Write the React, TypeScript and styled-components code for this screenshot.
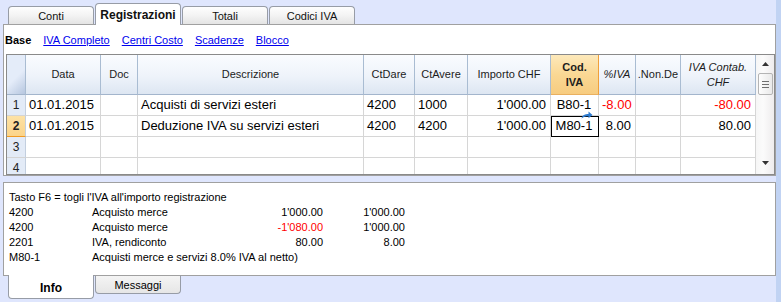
import { Fragment } from "react";
import styled, { createGlobalStyle } from "styled-components";

const GlobalStyle = createGlobalStyle`
  html, body {
    margin: 0;
    padding: 0;
  }
  body {
    font-family: "Liberation Sans", Arial, sans-serif;
    font-size: 11px;
    color: #000;
  }
`;

const Window = styled.div`
  width: 781px;
  height: 302px;
  box-sizing: border-box;
  background: #dfe6fd;
  border-right: 5px solid #c1d3f3;
  display: flex;
  flex-direction: column;
  overflow: hidden;
`;

const TopTabs = styled.div`
  display: flex;
  align-items: flex-end;
  gap: 1px;
  height: 24px;
  padding-left: 8px;
`;

const TopTab = styled.div<{ $active?: boolean }>`
  width: 86px;
  box-sizing: border-box;
  height: ${(p) => (p.$active ? 22 : 18)}px;
  margin-bottom: ${(p) => (p.$active ? -1 : 0)}px;
  border: 1px solid #979ca6;
  border-bottom: none;
  border-radius: 4px 4px 0 0;
  background: ${(p) =>
    p.$active ? "#fff" : "linear-gradient(#fefefe, #f3f3f3 50%, #e4e4e4)"};
  font-weight: ${(p) => (p.$active ? "bold" : "normal")};
  font-size: ${(p) => (p.$active ? 12 : 11)}px;
  color: #111;
  display: flex;
  align-items: center;
  justify-content: center;
  position: relative;
  z-index: ${(p) => (p.$active ? 2 : 1)};
`;

const MainPanel = styled.div`
  margin-left: 3px;
  height: 152px;
  box-sizing: border-box;
  border: 1px solid #a0a0a0;
  background: #fff;
  display: flex;
  flex-direction: column;
  padding-left: 1px;
`;

const ViewLinks = styled.div`
  height: 29px;
  display: flex;
  align-items: center;
  gap: 12px;
  font-size: 11px;
`;

const ViewName = styled.span<{ $current?: boolean }>`
  font-weight: ${(p) => (p.$current ? "bold" : "normal")};
  color: ${(p) => (p.$current ? "#000" : "#0000ee")};
  text-decoration: ${(p) => (p.$current ? "none" : "underline")};
`;

const GridFrame = styled.div`
  margin-left: 1px;
  height: 121px;
  box-sizing: border-box;
  border: 1px solid #8a8a8a;
  display: flex;
  overflow: hidden;
`;

const Table = styled.div`
  display: grid;
  grid-template-columns: 19px 75px 37px 226px 51px 53px 83px 48px 37px 45px 75px;
  grid-template-rows: 40px repeat(4, 21px);
  width: 749px;
`;

const Corner = styled.div`
  box-sizing: border-box;
  border-right: 1px solid #a9bcd2;
  border-bottom: 1px solid #a3b5cc;
  background: linear-gradient(135deg, #e4ecf9 55%, #b6c6df);
`;

const HeadCell = styled.div<{ $hot?: boolean; $italic?: boolean }>`
  box-sizing: border-box;
  display: flex;
  align-items: center;
  justify-content: center;
  text-align: center;
  overflow: hidden;
  white-space: nowrap;
  font-size: 11px;
  line-height: 15px;
  color: #1c1c1c;
  font-style: ${(p) => (p.$italic ? "italic" : "normal")};
  font-weight: ${(p) => (p.$hot ? "bold" : "normal")};
  border-right: 1px solid ${(p) => (p.$hot ? "#f0a03a" : "#a9bcd2")};
  border-bottom: 1px solid ${(p) => (p.$hot ? "#e9b060" : "#a3b5cc")};
  background: ${(p) =>
    p.$hot
      ? "linear-gradient(#fde9bb, #fad894 50%, #f7cc80)"
      : "linear-gradient(#fafcff, #eef3fa 55%, #dde6f2)"};
`;

const RowNum = styled.div<{ $current?: boolean }>`
  box-sizing: border-box;
  text-align: center;
  font-size: 12px;
  line-height: 20px;
  color: #222;
  font-weight: ${(p) => (p.$current ? "bold" : "normal")};
  background: ${(p) =>
    p.$current ? "linear-gradient(#fde2a6, #fbd48a)" : "#e3ebf7"};
  border-right: 1px solid #c3cfdf;
  border-bottom: 1px solid ${(p) => (p.$current ? "#f19a22" : "#d4d4d4")};
`;

const Cell = styled.div<{
  $align?: "left" | "right" | "center";
  $red?: boolean;
  $selected?: boolean;
}>`
  box-sizing: border-box;
  position: relative;
  border-right: 1px solid #d6d6d6;
  border-bottom: 1px solid #d6d6d6;
  font-size: 13px;
  line-height: 20px;
  padding: 0 4px 0 3px;
  white-space: nowrap;
  text-align: ${(p) => p.$align ?? "left"};
  color: ${(p) => (p.$red ? "#ff0000" : "#000")};
  outline: ${(p) => (p.$selected ? "1px solid #000" : "none")};
  outline-offset: -1px;
`;

const LinkArrow = styled.svg`
  position: absolute;
  left: 30px;
  top: -5px;
  width: 12px;
  height: 8px;
`;

const ScrollBar = styled.div`
  width: 19px;
  display: flex;
  flex-direction: column;
  align-items: center;
  background: linear-gradient(to right, #f6f6f6, #fbfbfb 40%, #eeeced);
`;

const ArrowBtn = styled.div<{ $down?: boolean }>`
  height: 18px;
  display: flex;
  align-items: center;
  justify-content: center;
  margin-top: ${(p) => (p.$down ? "auto" : "0")};
  margin-bottom: ${(p) => (p.$down ? "2px" : "0")};
`;

const Thumb = styled.div`
  width: 15px;
  height: 22px;
  box-sizing: border-box;
  border: 1px solid #b4b4b4;
  border-radius: 2px;
  background: linear-gradient(to right, #fdfdfd, #e9e9e9);
  display: flex;
  flex-direction: column;
  align-items: center;
  justify-content: center;
  gap: 2px;
`;

const Grip = styled.div`
  width: 7px;
  height: 1px;
  background: #6f6f6f;
`;

const InfoPanel = styled.div`
  margin-top: 6px;
  margin-left: 3px;
  height: 94px;
  box-sizing: border-box;
  border: 1px solid #a0a0a0;
  background: #fff;
  padding: 7px 0 0 5px;
  font-size: 11px;
  line-height: 15px;
`;

const InfoRow = styled.div`
  display: grid;
  grid-template-columns: 83px 160px 71px 82px;
  white-space: nowrap;
`;

const Amount = styled.span<{ $red?: boolean }>`
  text-align: right;
  color: ${(p) => (p.$red ? "#ff0000" : "#000")};
`;

const Wide = styled.span`
  grid-column: 2 / 5;
`;

const BottomTabs = styled.div`
  display: flex;
  align-items: flex-start;
  gap: 1px;
  margin-top: -1px;
  padding-left: 8px;
`;

const BottomTab = styled.div<{ $active?: boolean }>`
  width: 86px;
  box-sizing: border-box;
  height: ${(p) => (p.$active ? 24 : 19)}px;
  border: 1px solid #979ca6;
  border-top: ${(p) => (p.$active ? "none" : "1px solid #a0a0a0")};
  border-radius: 0 0 4px 4px;
  background: ${(p) =>
    p.$active ? "#fff" : "linear-gradient(#f4f4f4, #e6e6e6)"};
  font-weight: ${(p) => (p.$active ? "bold" : "normal")};
  font-size: ${(p) => (p.$active ? 12 : 11)}px;
  display: flex;
  align-items: center;
  justify-content: center;
  padding-top: ${(p) => (p.$active ? 2 : 0)}px;
  position: relative;
  z-index: 1;
`;

interface Entry {
  n: number;
  data?: string;
  desc?: string;
  dare?: string;
  avere?: string;
  importo?: string;
  cod?: string;
  pct?: string;
  iva?: string;
  red?: boolean;
}

const entries: Entry[] = [
  {
    n: 1,
    data: "01.01.2015",
    desc: "Acquisti di servizi esteri",
    dare: "4200",
    avere: "1000",
    importo: "1'000.00",
    cod: "B80-1",
    pct: "-8.00",
    iva: "-80.00",
    red: true,
  },
  {
    n: 2,
    data: "01.01.2015",
    desc: "Deduzione IVA su servizi esteri",
    dare: "4200",
    avere: "4200",
    importo: "1'000.00",
    cod: "M80-1",
    pct: "8.00",
    iva: "80.00",
  },
  { n: 3 },
  { n: 4 },
];

const infoLines = [
  { code: "4200", text: "Acquisto merce", a: "1'000.00", b: "1'000.00" },
  { code: "4200", text: "Acquisto merce", a: "-1'080.00", b: "1'000.00", red: true },
  { code: "2201", text: "IVA, rendiconto", a: "80.00", b: "8.00" },
];

export default function App() {
  return (
    <>
      <GlobalStyle />
      <Window>
        <TopTabs>
          <TopTab>Conti</TopTab>
          <TopTab $active>Registrazioni</TopTab>
          <TopTab>Totali</TopTab>
          <TopTab>Codici IVA</TopTab>
        </TopTabs>

        <MainPanel>
          <ViewLinks>
            <ViewName $current>Base</ViewName>
            <ViewName>IVA Completo</ViewName>
            <ViewName>Centri Costo</ViewName>
            <ViewName>Scadenze</ViewName>
            <ViewName>Blocco</ViewName>
          </ViewLinks>

          <GridFrame>
            <Table>
              <Corner />
              <HeadCell>Data</HeadCell>
              <HeadCell>Doc</HeadCell>
              <HeadCell>Descrizione</HeadCell>
              <HeadCell>CtDare</HeadCell>
              <HeadCell>CtAvere</HeadCell>
              <HeadCell>Importo CHF</HeadCell>
              <HeadCell $hot>
                Cod.
                <br />
                IVA
              </HeadCell>
              <HeadCell $italic>%IVA</HeadCell>
              <HeadCell>.Non.De</HeadCell>
              <HeadCell $italic>
                IVA Contab.
                <br />
                CHF
              </HeadCell>

              {entries.map((e) => (
                <Fragment key={e.n}>
                  <RowNum $current={e.n === 2}>{e.n}</RowNum>
                  <Cell>{e.data}</Cell>
                  <Cell />
                  <Cell>{e.desc}</Cell>
                  <Cell>{e.dare}</Cell>
                  <Cell>{e.avere}</Cell>
                  <Cell $align="right">{e.importo}</Cell>
                  <Cell $align="center" $selected={e.n === 2}>
                    {e.cod}
                    {e.n === 2 && (
                      <LinkArrow viewBox="0 0 12 8">
                        <path
                          d="M0.5 7.5 C1.5 4 4 3 7.5 3 L7.5 0.5 L11.5 4 L7.5 7.3 L7.5 5.2 C4.5 5.2 2.5 5.8 0.5 7.5 Z"
                          fill="#2c7bd0"
                        />
                      </LinkArrow>
                    )}
                  </Cell>
                  <Cell $align="right" $red={e.red}>
                    {e.pct}
                  </Cell>
                  <Cell />
                  <Cell $align="right" $red={e.red}>
                    {e.iva}
                  </Cell>
                </Fragment>
              ))}
            </Table>

            <ScrollBar>
              <ArrowBtn>
                <svg width="7" height="4" viewBox="0 0 7 4">
                  <path d="M0 4 L3.5 0 L7 4 Z" fill="#333" />
                </svg>
              </ArrowBtn>
              <Thumb>
                <Grip />
                <Grip />
                <Grip />
              </Thumb>
              <ArrowBtn $down>
                <svg width="7" height="4" viewBox="0 0 7 4">
                  <path d="M0 0 L7 0 L3.5 4 Z" fill="#333" />
                </svg>
              </ArrowBtn>
            </ScrollBar>
          </GridFrame>
        </MainPanel>

        <InfoPanel>
          <div>Tasto F6 = togli l'IVA all'importo registrazione</div>
          {infoLines.map((l, i) => (
            <InfoRow key={i}>
              <span>{l.code}</span>
              <span>{l.text}</span>
              <Amount $red={l.red}>{l.a}</Amount>
              <Amount>{l.b}</Amount>
            </InfoRow>
          ))}
          <InfoRow>
            <span>M80-1</span>
            <Wide>Acquisti merce e servizi 8.0% IVA al netto)</Wide>
          </InfoRow>
        </InfoPanel>

        <BottomTabs>
          <BottomTab $active>Info</BottomTab>
          <BottomTab>Messaggi</BottomTab>
        </BottomTabs>
      </Window>
    </>
  );
}
